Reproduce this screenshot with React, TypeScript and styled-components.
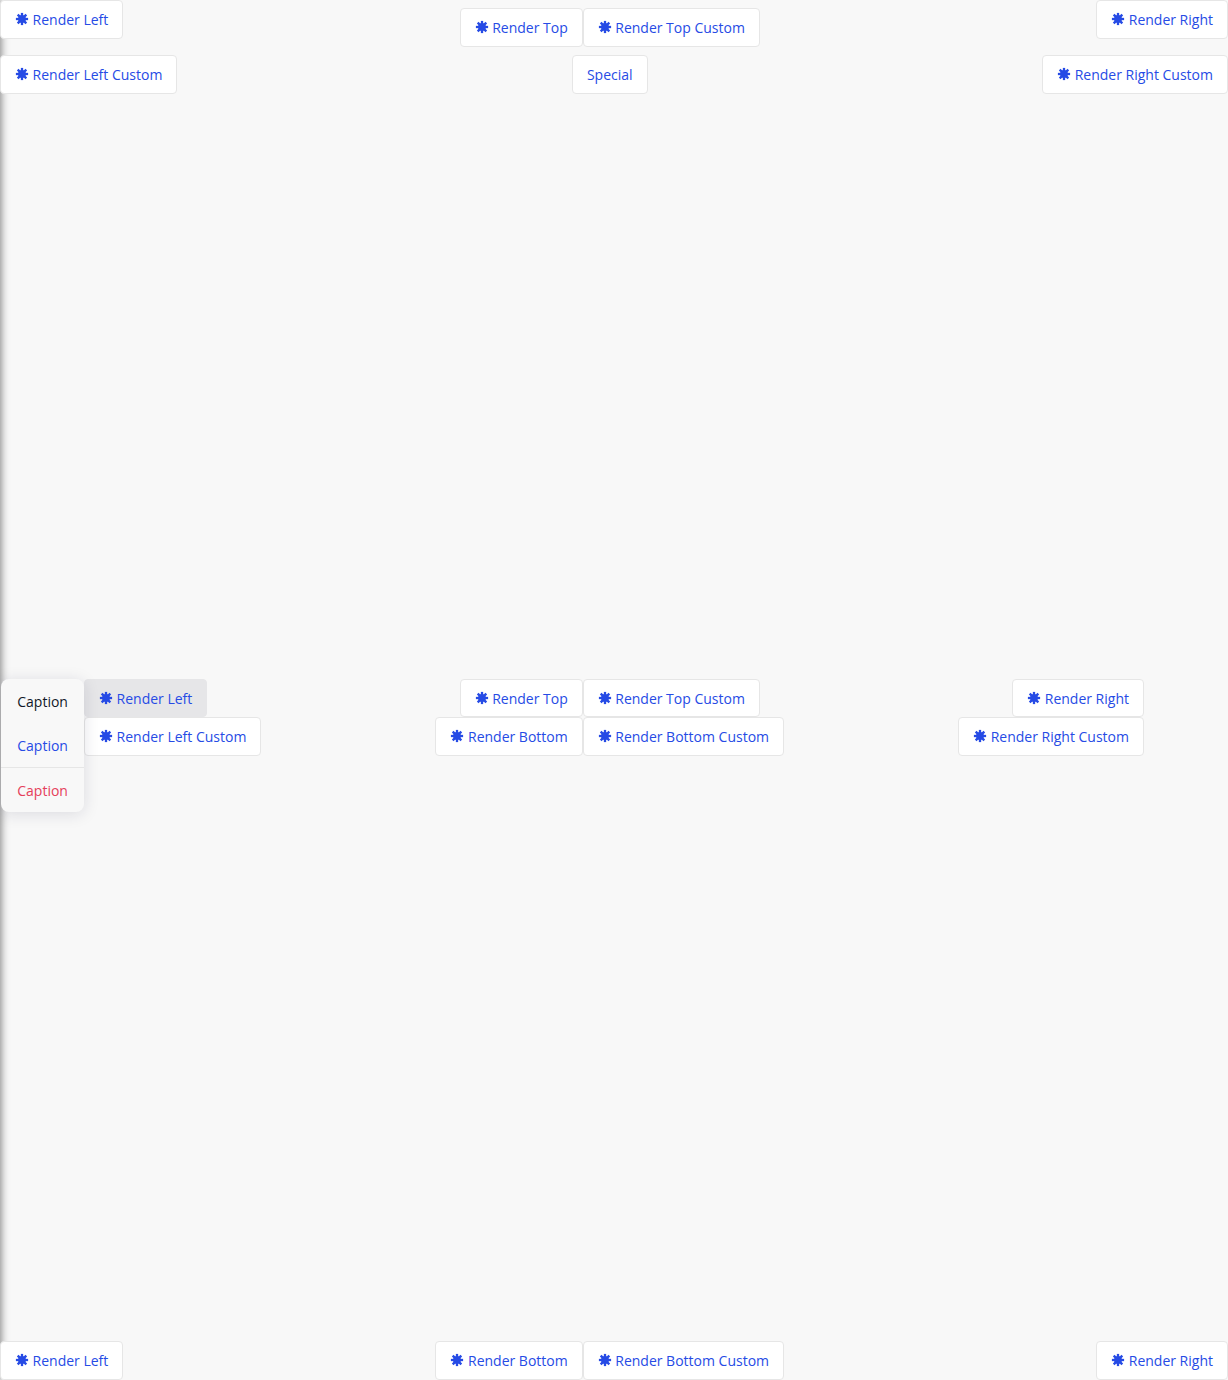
import React from 'react';
import styled, { createGlobalStyle } from 'styled-components';

const GlobalStyle = createGlobalStyle`
  *, *::before, *::after { box-sizing: border-box; }
  body { margin: 0; background: #f8f8f8; }
`;

const Page = styled.main`
  position: relative;
  display: flex;
  flex-direction: column;
  justify-content: space-between;
  height: 1380px;
  overflow: hidden;
  background: #f8f8f8;
  font-family: "Open Sans", "Noto Sans", sans-serif;
  font-size: 14px;
  line-height: 19px;
`;

const DrawerEdge = styled.aside`
  position: absolute;
  top: 0;
  bottom: 0;
  left: -10px;
  width: 10px;
  box-shadow: 0 0 10px rgba(0, 0, 0, 0.6);
`;

const Bar = styled.section<{ $inset?: boolean }>`
  position: relative;
  display: flex;
  justify-content: space-between;
  padding-right: ${({ $inset }) => ($inset ? '84px' : '0')};
`;

const Column = styled.div<{ $align?: string; $gap?: number; $top?: number }>`
  display: flex;
  flex-direction: column;
  align-items: ${({ $align }) => $align ?? 'flex-start'};
  gap: ${({ $gap }) => $gap ?? 0}px;
  padding-top: ${({ $top }) => $top ?? 0}px;
`;

const Row = styled.div`
  display: flex;
`;

const MenuSide = styled.div`
  display: flex;
  align-items: flex-start;
  height: 77px;
  padding-left: 1px;
`;

const ActionButton = styled.button<{ $short?: boolean; $active?: boolean }>`
  display: flex;
  align-items: center;
  height: ${({ $short }) => ($short ? 38 : 39)}px;
  padding: 0 14px;
  border: 1px solid ${({ $active }) => ($active ? '#e6e6e8' : '#e6e6e6')};
  border-radius: 4px;
  background: ${({ $active }) => ($active ? '#e6e6e8' : '#ffffff')};
  color: #264be5;
  font: inherit;
  white-space: nowrap;
`;

const StarIcon = styled.svg`
  flex: none;
  width: 14px;
  height: 14px;
  margin-right: 3.55px;
  margin-bottom: 1px;
  fill: currentColor;
`;

const Menu = styled.div`
  position: relative;
  z-index: 1;
  flex: none;
  width: 83px;
  border-radius: 8px;
  background: #f8f8f8;
  box-shadow: 0 2px 16px rgba(20, 20, 60, 0.13);
`;

const MenuItem = styled.div<{ $color: string; $divided?: boolean }>`
  display: flex;
  align-items: center;
  height: ${({ $divided }) => ($divided ? 45 : 44)}px;
  padding: 1px 15.75px 0 16.25px;
  border-top: ${({ $divided }) => ($divided ? '1px solid #e6e6e6' : 'none')};
  color: ${({ $color }) => $color};
`;

interface ActionProps {
  label: string;
  short?: boolean;
  active?: boolean;
  plain?: boolean;
}

function Action({ label, short, active, plain }: ActionProps) {
  return (
    <ActionButton type="button" $short={short} $active={active}>
      {!plain && (
        <StarIcon viewBox="0 0 14 14" aria-hidden="true">
          <circle cx="7" cy="7" r="3.9" />
          {[0, 45, 90, 135].map((angle) => (
            <rect key={angle} x="5.85" y="0.9" width="2.3" height="12.2" transform={`rotate(${angle} 7 7)`} />
          ))}
        </StarIcon>
      )}
      <span>{label}</span>
    </ActionButton>
  );
}

export default function App() {
  return (
    <>
      <GlobalStyle />
      <Page>
        <DrawerEdge />
        <Bar>
          <Column $gap={16}>
            <Action label="Render Left" />
            <Action label="Render Left Custom" />
          </Column>
          <Column $align="center" $gap={8} $top={8}>
            <Row>
              <Action label="Render Top" />
              <Action label="Render Top Custom" />
            </Row>
            <Action label="Special" plain />
          </Column>
          <Column $align="flex-end" $gap={16}>
            <Action label="Render Right" />
            <Action label="Render Right Custom" />
          </Column>
        </Bar>
        <Bar $inset>
          <MenuSide>
            <Menu>
              <MenuItem $color="#101828">Caption</MenuItem>
              <MenuItem $color="#264be5">Caption</MenuItem>
              <MenuItem $color="#e5405a" $divided>Caption</MenuItem>
            </Menu>
            <Column>
              <Action label="Render Left" short active />
              <Action label="Render Left Custom" />
            </Column>
          </MenuSide>
          <Column $align="center">
            <Row>
              <Action label="Render Top" short />
              <Action label="Render Top Custom" short />
            </Row>
            <Row>
              <Action label="Render Bottom" />
              <Action label="Render Bottom Custom" />
            </Row>
          </Column>
          <Column $align="flex-end">
            <Action label="Render Right" short />
            <Action label="Render Right Custom" />
          </Column>
        </Bar>
        <Bar>
          <Action label="Render Left" />
          <Row>
            <Action label="Render Bottom" />
            <Action label="Render Bottom Custom" />
          </Row>
          <Action label="Render Right" />
        </Bar>
      </Page>
    </>
  );
}
